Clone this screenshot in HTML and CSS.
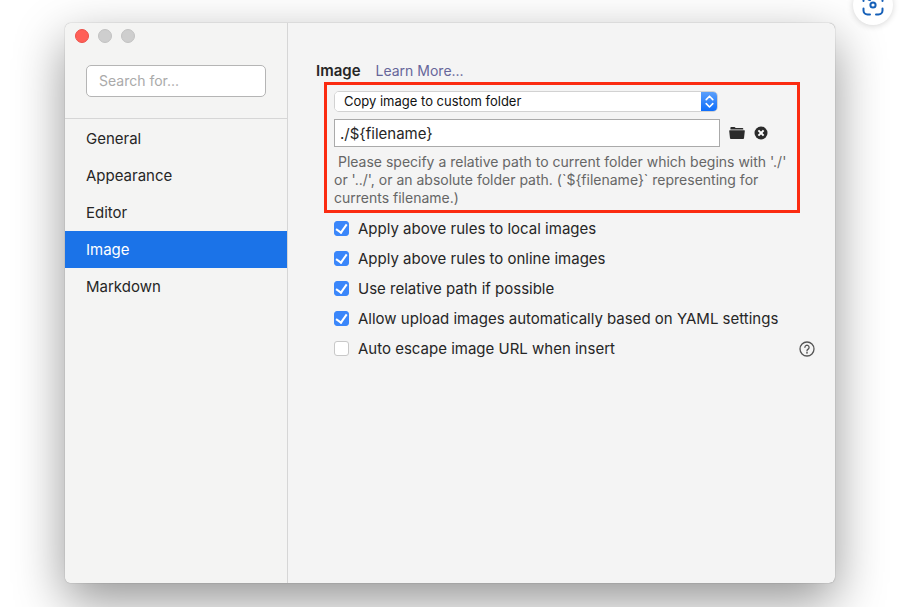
FILE: index.html
```html
<!DOCTYPE html>
<html lang="en">
<head>
<meta charset="utf-8">
<title>Preferences</title>
<link rel="stylesheet" href="styles.css">
</head>
<body>
<button class="capture" type="button" aria-label="Visual search">
  <svg width="22" height="22" viewBox="0 0 22 22" fill="none" stroke="#1660b8" stroke-width="2" stroke-linecap="round">
    <path d="M1.500 7V5.500a4 4 0 0 1 4-4H7M15 1.500h1.500a4 4 0 0 1 4 4V7M20.500 14.500v2a4 4 0 0 1-4 4H14M8 20.500H5.500a4 4 0 0 1-4-4v-2M8 6.200 6.500 5.500"/>
    <circle cx="11" cy="11" r="2.6"/>
  </svg>
</button>
<div class="window">
  <aside class="sidebar">
    <div class="lights">
      <button class="light close" type="button" aria-label="Close"></button>
      <button class="light" type="button" aria-label="Minimize"></button>
      <button class="light" type="button" aria-label="Zoom"></button>
    </div>
    <div class="search">
      <input class="search-input" type="text" placeholder="Search for..." aria-label="Search">
    </div>
    <nav class="nav">
      <a href="#general">General</a>
      <a href="#appearance">Appearance</a>
      <a href="#editor">Editor</a>
      <a class="active" href="#image">Image</a>
      <a href="#markdown">Markdown</a>
    </nav>
  </aside>
  <main class="content">
    <header class="heading">
      <h1>Image</h1>
      <a href="#learn">Learn More...</a>
    </header>
    <section class="rule">
      <div class="select-wrap">
        <select class="select" aria-label="Image insert action">
          <option>Copy image to custom folder</option>
        </select>
        <span class="stepper">
          <svg width="17" height="21" viewBox="0 0 17 21" fill="none" stroke="#fff" stroke-width="1.6" stroke-linecap="round" stroke-linejoin="round"><path d="M5.200 8.600 8.500 5.200l3.300 3.400M5.200 12.600l3.300 3.400 3.300-3.400"/></svg>
        </span>
      </div>
      <div class="path-row">
        <input class="path" type="text" value="./${filename}" aria-label="Folder path">
        <button class="icon-button" type="button" aria-label="Choose folder">
          <svg width="16" height="14" viewBox="0 0 16 14" fill="#2b2b2b"><path d="M1.400 3.600V1.800q0-.8.8-.8h3.200q.7 0 .9.600l.2.500h7q.8 0 .8.800v.7zM.7 4.300h14.600q.6 0 .5.600l-.8 7.300q-.1.800-.9.800H1.900q-.8 0-.9-.8L.2 4.900q0-.6.5-.6z"/></svg>
        </button>
        <button class="icon-button" type="button" aria-label="Clear folder">
          <svg width="14" height="14" viewBox="0 0 14 14"><circle cx="7" cy="7" r="6.500" fill="#2b2b2b"/><path d="m4.400 4.400 5.200 5.200m0-5.200L4.400 9.600" stroke="#fff" stroke-width="2"/></svg>
        </button>
      </div>
      <p class="hint">&nbsp;Please specify a relative path to current folder which begins with './' or '../', or an absolute folder path. (`${filename}` representing for currents filename.)</p>
    </section>
    <div class="options">
      <label class="option"><input type="checkbox" checked>Apply above rules to local images</label>
      <label class="option"><input type="checkbox" checked>Apply above rules to online images</label>
      <label class="option"><input type="checkbox" checked>Use relative path if possible</label>
      <label class="option"><input type="checkbox" checked>Allow upload images automatically based on YAML settings</label>
      <div class="option-row">
        <label class="option"><input type="checkbox">Auto escape image URL when insert</label>
        <button class="icon-button" type="button" aria-label="Help">
          <svg width="16" height="16" viewBox="0 0 16 16" fill="none" stroke="#555" stroke-width="1.3" stroke-linecap="round"><circle cx="8" cy="8" r="7"/><path d="M5.900 6.300a2.100 2.100 0 1 1 3.300 1.800C8.300 8.700 8 9 8 9.800"/><circle cx="8" cy="11.800" r=".3"/></svg>
        </button>
      </div>
    </div>
  </main>
</div>
</body>
</html>
```
FILE: styles.css
```css
* { box-sizing: border-box; }

body {
  margin: 0;
  min-height: 100vh;
  padding: 23px 66px 24px 65px;
  display: flex;
  background: #fff;
  color: #262626;
  font: 15px/20px Inter, "Liberation Sans", sans-serif;
  overflow: hidden;
}

button { padding: 0; border: 0; background: none; }
a { color: inherit; text-decoration: none; }
svg { display: block; }

.capture {
  position: absolute;
  top: -15px;
  right: 8px;
  width: 40px;
  height: 40px;
  border-radius: 50%;
  background: #fff;
  box-shadow: 0 1px 6px rgba(0, 0, 0, .16);
  display: grid;
  place-items: center;
}

.window {
  flex: 1;
  display: flex;
  border-radius: 6px;
  background: #f4f4f4;
  box-shadow: 0 0 1px rgba(0, 0, 0, .5), 0 18px 50px rgba(0, 0, 0, .42);
}

.sidebar {
  flex: 0 0 223px;
  border-right: 1px solid #d6d6d6;
  border-radius: 6px 0 0 6px;
  background: #f4f4f3;
}

.lights {
  display: flex;
  gap: 9px;
  padding: 6px 10px 0;
}

.light {
  width: 14px;
  height: 14px;
  border: 1px solid #c2c2c2;
  border-radius: 50%;
  background: #cecece;
}

.close { border-color: #ec5049; background: #ff5f57; }

.search {
  padding: 22px 21px 21px;
  border-bottom: 1px solid #d6d6d6;
}

.search-input {
  display: block;
  width: 100%;
  height: 32px;
  padding: 0 12px 2px;
  border: 1px solid #b5b5b5;
  border-radius: 5px;
  background: #fff;
  font: 14px/20px Inter, sans-serif;
}

.search-input::placeholder { color: #aaa; }

.nav { display: flex; flex-direction: column; padding-top: 1px; }

.nav a {
  padding: 9px 21px 8px;
  font-size: 15px;
}

.nav .active { background: #1b73e8; color: #fff; }

.content {
  flex: 1;
  min-width: 0;
  padding: 38px 20px 20px 28px;
}

.heading {
  display: flex;
  align-items: baseline;
  gap: 15px;
}

.heading h1 { margin: 0; font-size: 15px; font-weight: 600; }
.heading a { color: #66669a; font-size: 14px; }

.rule {
  margin: 1px 15px 0 8px;
  padding: 6px 7px 3px;
  border: 3px solid #fb2b11;
}

.select-wrap {
  display: flex;
  width: 384px;
  max-width: 100%;
  height: 21px;
  overflow: hidden;
  border: 1px solid #d2d2d2;
  border-radius: 5px;
  background: #fff;
}

.select {
  flex: 1;
  appearance: none;
  padding: 0 9px;
  border: 0;
  background: #fff;
  color: #111;
  font: 13px/19px Inter, sans-serif;
}

.stepper {
  margin: -1px;
  background: linear-gradient(#5fa2fb, #0a6bfb);
}

.path-row {
  display: flex;
  align-items: center;
  gap: 9px;
  margin-top: 7px;
}

.path {
  width: 386px;
  height: 28px;
  padding: 0 5px;
  border: 1px solid #aaa;
  background: #fff;
  color: #262626;
  font: 15px/20px Inter, sans-serif;
}

.hint {
  margin: 6px 0 0;
  color: #666;
  font-size: 14px;
  line-height: 18px;
}

.options {
  display: flex;
  flex-direction: column;
  gap: 10px;
  margin: 6px 0 0 18px;
}

.option {
  display: flex;
  align-items: center;
  gap: 9px;
}

.option-row { display: flex; justify-content: space-between; align-items: center; }

.option input {
  flex: none;
  appearance: none;
  width: 15px;
  height: 15px;
  margin: 0 0 2px;
  border: 1px solid #c8c8c8;
  border-radius: 3px;
  background: #fff;
}

.option input:checked {
  display: grid;
  place-items: center;
  border-color: #3a86fa;
  background: #3a86fa;
}

.option input:checked::before {
  content: "";
  width: 5px;
  height: 9px;
  margin-bottom: 2px;
  border: solid #fff;
  border-width: 0 2px 2px 0;
  transform: rotate(35deg);
}
```
